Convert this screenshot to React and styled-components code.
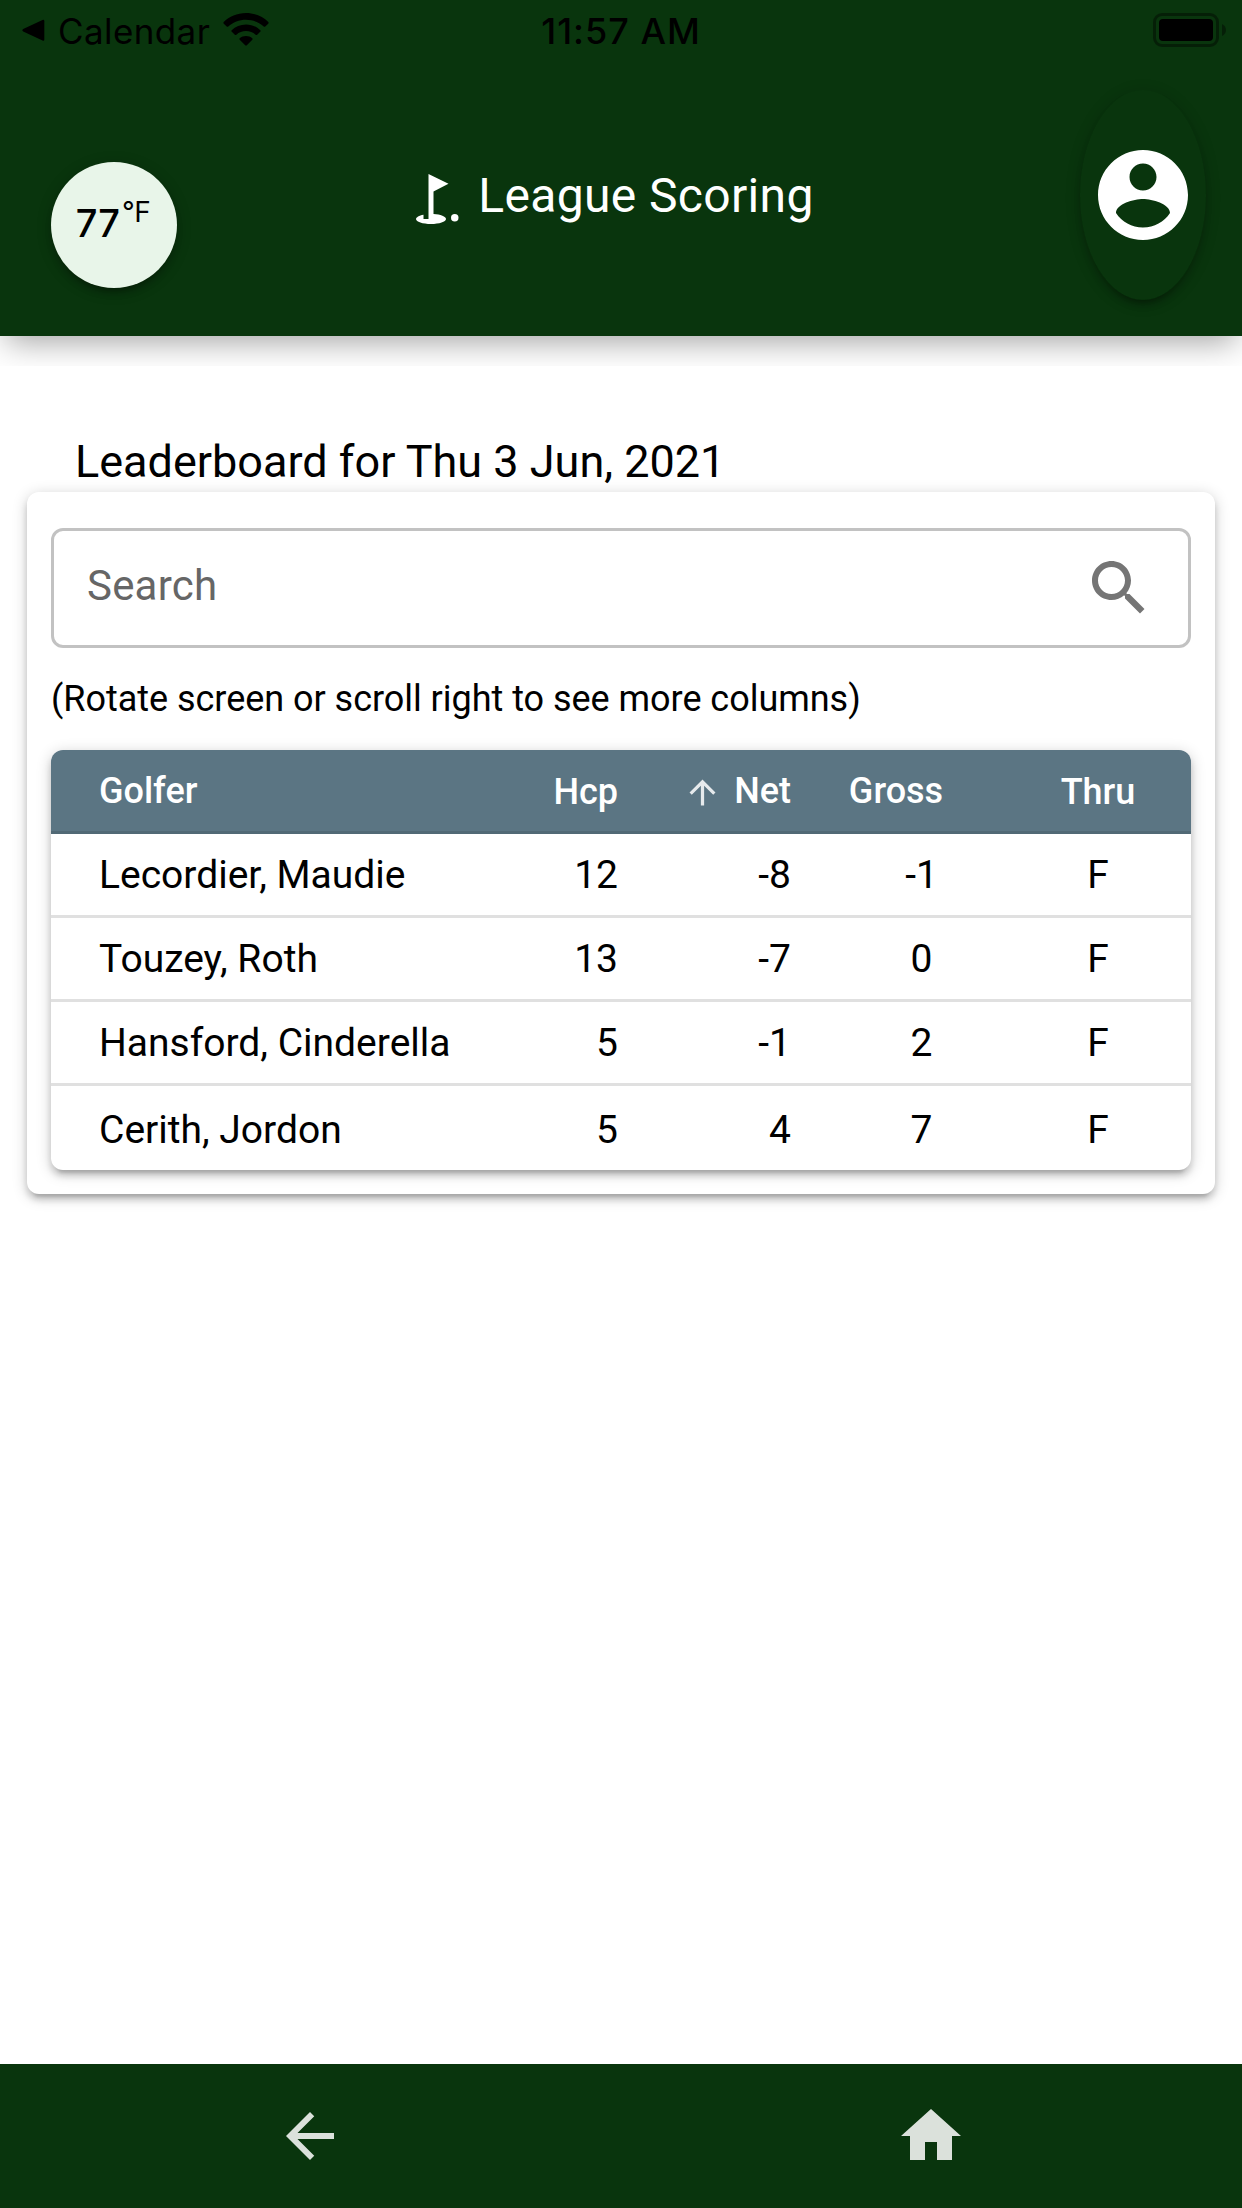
import React from 'react';
import styled, { createGlobalStyle } from 'styled-components';

const golfers = [
  { id: 1, name: 'Lecordier, Maudie', hcp: '12', net: '-8', gross: '-1', thru: 'F' },
  { id: 2, name: 'Touzey, Roth', hcp: '13', net: '-7', gross: '0', thru: 'F' },
  { id: 3, name: 'Hansford, Cinderella', hcp: '5', net: '-1', gross: '2', thru: 'F' },
  { id: 4, name: 'Cerith, Jordon', hcp: '5', net: '4', gross: '7', thru: 'F' },
];

const Icon = ({ size, children }) => (
  <Svg $size={size} viewBox="0 0 24 24" fill="currentColor">
    {children}
  </Svg>
);

const StatusBar = () => (
  <StatusWrapper>
    <BackToApp>
      <svg width="23" height="23" viewBox="0 0 23 23">
        <path d="M1.2 10 20.5 1Q22.3 .4 22.3 2.2V20.4Q22.3 22.2 20.5 21.5L1.2 12.5Q-.6 11.3 1.2 10Z" />
      </svg>
      <AppName>Calendar</AppName>
      <svg width="46" height="34" viewBox="0 0 46 34">
        <path d="M23 0C31.8 0 39.8 3.5 45.3 9Q46 9.9 45.2 10.7L42.3 13.5Q41.5 14.2 40.7 13.5C36 9.2 29.8 6.7 23 6.7S10 9.2 5.3 13.5Q4.5 14.2 3.7 13.5L.8 10.7Q0 9.9.7 9C6.2 3.5 14.2 0 23 0Z" />
        <path d="M23 11.5C28.6 11.5 33.6 13.6 37.3 17.2Q38 18 37.2 18.8L34.2 21.7Q33.4 22.4 32.6 21.7C30 19.4 26.7 18.1 23 18.1S16 19.4 13.4 21.7Q12.6 22.4 11.8 21.7L8.8 18.8Q8 18 8.7 17.2C12.4 13.6 17.4 11.5 23 11.5Z" />
        <path d="M23 23C25.4 23 27.6 23.8 29.3 25.2Q30.1 26 29.3 26.8L23.8 32.3Q23 33 22.2 32.3L16.7 26.8Q15.9 26 16.7 25.2C18.4 23.8 20.6 23 23 23Z" />
      </svg>
    </BackToApp>
    <Clock>11:57 AM</Clock>
    <BatteryHolder>
      <svg width="73" height="34" viewBox="0 0 73 34">
        <rect x="1.5" y="1.5" width="63" height="31" rx="7.5" fill="none" stroke="#000" strokeWidth="3" opacity="0.4" />
        <rect x="6" y="6" width="54" height="22" rx="4" />
        <path d="M69 11Q73 13 73 17T69 23Z" opacity="0.4" />
      </svg>
    </BatteryHolder>
  </StatusWrapper>
);

const Header = () => (
  <HeaderWrapper>
    <StatusBar />
    <Toolbar>
      <Temperature>
        77<sup>°F</sup>
      </Temperature>
      <Title>
        <Icon size={60}>
          <circle cx="19.5" cy="19.5" r="1.5" />
          <path d="M17 5.92 9 2v18H7v-1.73c-1.79.35-3 .99-3 1.73 0 1.1 2.69 2 6 2s6-.9 6-2c0-.99-2.16-1.81-5-1.97V8.98l6-3.06z" />
        </Icon>
        <span>League Scoring</span>
      </Title>
      <Account aria-label="Account">
        <Icon size={108}>
          <path d="M12 2C6.48 2 2 6.48 2 12s4.48 10 10 10 10-4.48 10-10S17.52 2 12 2zm0 3c1.66 0 3 1.34 3 3s-1.34 3-3 3-3-1.34-3-3 1.34-3 3-3zm0 14.2c-2.5 0-4.71-1.28-6-3.22.03-1.99 4-3.08 6-3.08 1.99 0 5.97 1.09 6 3.08-1.29 1.94-3.5 3.22-6 3.22z" />
        </Icon>
      </Account>
    </Toolbar>
  </HeaderWrapper>
);

const Leaderboard = () => (
  <Main>
    <Heading>Leaderboard for Thu 3 Jun, 2021</Heading>
    <Card>
      <SearchBox>
        <input type="text" placeholder="Search" />
        <Icon size={72}>
          <path d="M15.5 14h-.79l-.28-.27C15.41 12.59 16 11.11 16 9.5 16 5.91 13.09 3 9.5 3S3 5.91 3 9.5 5.91 16 9.5 16c1.61 0 3.09-.59 4.23-1.57l.27.28v.79l5 4.99L20.49 19l-4.99-5zm-6 0C7.01 14 5 11.99 5 9.5S7.01 5 9.5 5 14 7.01 14 9.5 11.99 14 9.5 14z" />
        </Icon>
      </SearchBox>
      <Hint>(Rotate screen or scroll right to see more columns)</Hint>
      <Table>
        <HeadRow>
          <Name>Golfer</Name>
          <Cell $low>Hcp</Cell>
          <Cell>
            <Icon size={39}>
              <path d="M4 12l1.41 1.41L11 7.83V20h2V7.83l5.58 5.59L20 12l-8-8-8 8z" />
            </Icon>
            Net
          </Cell>
          <Cell $center $inset={51}>Gross</Cell>
          <Cell $center $low $inset={47}>Thru</Cell>
        </HeadRow>
        {golfers.map((golfer) => {
          const { id, name, hcp, net, gross, thru } = golfer;
          return (
            <Row key={id}>
              <Name>{name}</Name>
              <Cell>{hcp}</Cell>
              <Cell>{net}</Cell>
              <Cell $center>{gross}</Cell>
              <Cell $center $inset={47}>{thru}</Cell>
            </Row>
          );
        })}
      </Table>
    </Card>
  </Main>
);

const Footer = () => (
  <FooterWrapper>
    <NavButton aria-label="Back">
      <Icon size={72}>
        <path d="M20 11H7.83l5.59-5.59L12 4l-8 8 8 8 1.41-1.41L7.83 13H20v-2z" />
      </Icon>
    </NavButton>
    <NavButton aria-label="Home">
      <Icon size={72}>
        <path d="M10 20v-6h4v6h5v-8h3L12 3 2 12h3v8z" />
      </Icon>
    </NavButton>
  </FooterWrapper>
);

const App = () => {
  return (
    <>
      <GlobalStyle />
      <Screen>
        <Header />
        <Leaderboard />
        <Footer />
      </Screen>
    </>
  );
};

const GlobalStyle = createGlobalStyle`
  * {
    box-sizing: border-box;
    margin: 0;
    padding: 0;
  }

  body {
    background-color: #fff;
    color: #000;
    font-family: Roboto, "Liberation Sans", sans-serif;
  }

  button {
    border: 0;
    background: none;
    cursor: pointer;
  }

  svg {
    display: block;
    flex-shrink: 0;
  }
`;

const raised = `0 3px 15px 0 rgba(0, 0, 0, 0.2), 0 6px 6px 0 rgba(0, 0, 0, 0.14),
    0 9px 3px -6px rgba(0, 0, 0, 0.12)`;

const Svg = styled.svg`
  width: ${({ $size }) => $size}px;
  height: ${({ $size }) => $size}px;
`;

const Screen = styled.div`
  display: flex;
  flex-direction: column;
  width: 1242px;
  height: 2208px;
  overflow: hidden;
`;

const HeaderWrapper = styled.header`
  flex-shrink: 0;
  height: 336px;
  background-color: #09350d;
  box-shadow: 0 12px 30px -6px rgba(0, 0, 0, 0.36);
  clip-path: inset(0 0 -30px 0);
`;

const StatusWrapper = styled.div`
  display: grid;
  grid-template-columns: 1fr auto 1fr;
  align-items: center;
  height: 60px;
  padding: 0 16px;
  font-family: Inter, "Liberation Sans", sans-serif;
`;

const BackToApp = styled.div`
  display: flex;
  align-items: center;
  padding-left: 6px;
`;

const AppName = styled.span`
  margin: 2px 13px 0 13px;
  font-size: 35px;
  line-height: 42px;
  letter-spacing: 0.4px;
`;

const Clock = styled.span`
  margin-top: 2px;
  font-size: 36px;
  font-weight: 500;
  line-height: 42px;
  letter-spacing: 1px;
`;

const BatteryHolder = styled.div`
  display: flex;
  justify-content: flex-end;
`;

const Toolbar = styled.div`
  display: flex;
  align-items: center;
  height: 210px;
  margin-top: 30px;
  padding: 0 36px 0 51px;
`;

const Temperature = styled.div`
  display: flex;
  justify-content: center;
  width: 126px;
  height: 126px;
  margin-top: 60px;
  padding-right: 2px;
  border-radius: 50%;
  background-color: #e8f5e9;
  box-shadow: ${raised};
  font-family: Inter, "Liberation Sans", sans-serif;
  font-size: 38px;
  font-weight: 500;
  line-height: 122px;

  sup {
    margin-left: 2px;
    font-size: 28px;
    font-weight: 400;
    line-height: 100px;
    letter-spacing: -0.6px;
  }
`;

const Title = styled.h1`
  display: flex;
  flex: 1;
  align-items: center;
  justify-content: center;
  gap: 12px;
  padding: 2px 37px 0 0;
  color: #fff;
  font-size: 48px;
  font-weight: 400;
  line-height: 72px;
  letter-spacing: 0.36px;

  svg {
    margin-top: 6px;
  }
`;

const Account = styled.button`
  display: flex;
  align-items: center;
  justify-content: center;
  width: 126px;
  height: 210px;
  border-radius: 50%;
  box-shadow: ${raised};
  color: #fff;
`;

const Main = styled.main`
  flex: 1;
  padding: 96px 27px 0;
`;

const Heading = styled.h2`
  padding-left: 48px;
  font-size: 45px;
  font-weight: 400;
  line-height: 60px;
`;

const Card = styled.section`
  padding: 36px 24px 24px;
  border-radius: 12px;
  background-color: #fff;
  box-shadow: ${raised};
`;

const SearchBox = styled.div`
  display: flex;
  align-items: center;
  height: 120px;
  padding: 0 33px;
  border: 3px solid rgba(0, 0, 0, 0.24);
  border-radius: 12px;
  color: #757575;

  input {
    flex: 1;
    min-width: 0;
    height: 60px;
    margin-bottom: 5px;
    border: 0;
    outline: 0;
    background: none;
    font-family: inherit;
    font-size: 42px;
    letter-spacing: 0.2px;
  }

  input::placeholder {
    color: #666;
  }
`;

const Hint = styled.p`
  padding: 24px 0;
  font-size: 36px;
  line-height: 54px;
  letter-spacing: -0.03px;
`;

const Table = styled.div`
  overflow: hidden;
  border-radius: 12px;
  box-shadow: ${raised};
`;

const Row = styled.div`
  display: grid;
  grid-template-columns: 454px 113px 173px 261px 1fr;
  align-items: center;
  height: 84px;
  border-bottom: 3px solid #e0e0e0;
  font-size: 39px;

  &:last-child {
    padding-top: 3px;
    border-bottom: 0;
  }
`;

const HeadRow = styled(Row)`
  border-bottom-color: #516975;
  background-color: #5b7583;
  color: #fff;
  font-size: 36px;
  font-weight: 500;
`;

const Name = styled.div`
  padding-left: 48px;
`;

const Cell = styled.div`
  display: flex;
  align-items: center;
  justify-content: ${({ $center }) => ($center ? 'center' : 'flex-end')};
  padding-top: ${({ $low }) => ($low ? 2 : 0)}px;
  padding-right: ${({ $inset = 0 }) => $inset}px;

  svg {
    margin: 4px 12px 0 0;
    opacity: 0.85;
  }
`;

const FooterWrapper = styled.footer`
  display: flex;
  flex-shrink: 0;
  height: 144px;
  padding-right: 1px;
  background-color: #09350d;
`;

const NavButton = styled.button`
  display: flex;
  flex: 1;
  align-items: center;
  justify-content: center;
  color: #dbe1db;
`;

export default App;
